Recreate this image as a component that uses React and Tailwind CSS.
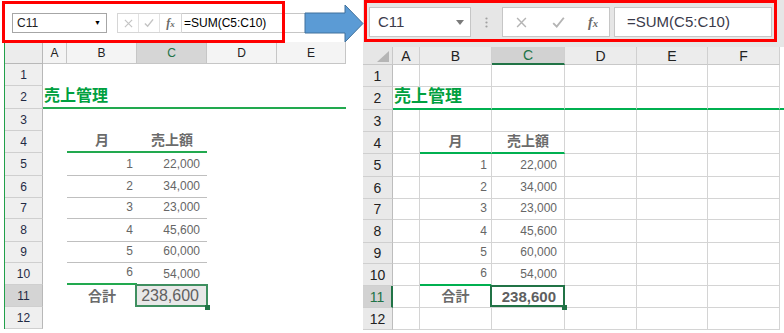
const rowH = ['h-[22px]', 'h-[23px]', 'h-[22px]', 'h-[22px]', 'h-[23px]', 'h-[22px]', 'h-[21px]', 'h-[23px]', 'h-[21px]', 'h-[22px]', 'h-[22px]', 'h-[22px]'];
const amounts = ['22,000', '34,000', '23,000', '45,600', '60,000', '54,000'];

const XIcon = ({ size = 10, color = '#c4c4c4' }) => (
  <svg width={size} height={size} viewBox="0 0 10 10">
    <path d="M1 1L9 9M9 1L1 9" stroke={color} strokeWidth="1.3" fill="none" />
  </svg>
);

const CheckIcon = ({ size = 11, color = '#c4c4c4' }) => (
  <svg width={size} height={size} viewBox="0 0 11 11">
    <path d="M1 6L4 9L10 1.5" stroke={color} strokeWidth="1.6" fill="none" />
  </svg>
);

const Fx = ({ cls }) => (
  <span className={`font-['Liberation_Serif',serif] italic font-bold text-[#6a6a6a] ${cls}`}>
    f<span className="text-[0.75em]">x</span>
  </span>
);

// border-b classes of one data cell
function leftBorder(r, c) {
  if (r === 2) return 'border-b-2 border-b-[#22a94f]';
  if (r === 4 && (c === 1 || c === 2)) return 'border-b-2 border-b-[#22a94f]';
  if (r >= 5 && r <= 9 && (c === 1 || c === 2)) return 'border-b border-b-[#bfbfbf]';
  if (r === 10 && c === 1) return 'border-b-2 border-b-[#22a94f]';
  return '';
}

function rightBorder(r, c) {
  if (r === 2) return 'border-b-2 border-b-[#00b050]';
  if (r === 4 && (c === 1 || c === 2)) return 'border-b-2 border-b-[#00b050]';
  if (r === 10 && c === 1) return 'border-b-2 border-b-[#00b050]';
  return 'border-b border-b-[#d4d4d4]';
}

function CellText({ side, r, c }) {
  const big = side === 'R';
  if (r === 2 && c === 0)
    return (
      <span className={`relative z-10 whitespace-nowrap pb-[3px] pl-[1px] font-bold leading-none text-[#00a040] ${big ? 'text-[17px]' : 'text-[16px]'}`}>
        売上管理
      </span>
    );
  if ((r === 4 || r === 11) && c === 1)
    return <span className="w-full pb-[4px] text-center text-[14px] font-bold leading-none text-[#6b6b6b]">{r === 4 ? '月' : '合計'}</span>;
  if (r === 4 && c === 2)
    return <span className="w-full pb-[4px] text-center text-[14px] font-bold leading-none text-[#6b6b6b]">売上額</span>;
  if (r >= 5 && r <= 10 && c === 1)
    return <span className="w-full pb-[5px] pr-[4px] text-right text-[12px] leading-none text-[#666]">{r - 4}</span>;
  if (r >= 5 && r <= 10 && c === 2)
    return <span className="w-full pb-[5px] pr-[7px] text-right text-[12px] leading-none text-[#666]">{amounts[r - 5]}</span>;
  if (r === 11 && c === 2)
    return (
      <>
        <span className={`relative z-10 w-full self-center pr-[8px] text-right leading-none ${big ? 'text-[15px] font-bold text-[#5f5f5f]' : 'text-[16px] text-[#606060]'}`}>
          238,600
        </span>
        <div className={`absolute -left-[2px] -top-[1px] bottom-0 -right-[1px] border-2 ${big ? 'border-[#217346]' : 'border-[#3f8f60] bg-[#e8e8e8]'}`} />
        <div className="absolute -bottom-[3px] -right-[3px] z-20 h-[5px] w-[5px] bg-[#217346]" />
      </>
    );
  return null;
}

const LeftSheet = () => (
  <div className="w-[346px] shrink-0">
    <div className="flex h-[42px] items-start pl-[12px] pt-[13px]">
      <div className="flex h-[20px] w-[95px] items-center justify-between border border-[#a6a6a6] pl-[4px] pr-[5px] text-[12px] text-[#222]">
        <span>C11</span>
        <span className="text-[7px] text-black">▼</span>
      </div>
      <div className="ml-[10px] flex h-[20px] border border-[#d6d6d6]">
        <div className="flex w-[21px] items-center justify-center border-r border-[#e2e2e2]">
          <XIcon size={9} />
        </div>
        <div className="flex w-[21px] items-center justify-center border-r border-[#e2e2e2]">
          <CheckIcon size={10} />
        </div>
        <div className="flex w-[21px] items-center justify-center">
          <Fx cls="text-[12px]" />
        </div>
      </div>
      <div className="flex h-[20px] flex-1 items-center border border-l-0 border-[#c6c6c6] pl-[2px] text-[12px] text-black">
        =SUM(C5:C10)
      </div>
    </div>
    <div className="flex">
      <div className="w-[4px]" />
      <div className="border-l border-[#21a04a]">
        <div className="grid h-[22px] grid-cols-[38px_24px_70px_70px_70px_69px] grid-rows-[22px]">
          <div className="border-b border-r border-[#b8b8b8] bg-[#ececec]" />
          {['A', 'B', 'C', 'D', 'E'].map((l) => (
            <div
              key={l}
              className={`flex items-center justify-center border-b border-r border-[#c6c6c6] text-[12px] ${l === 'C' ? 'bg-[#d6d6d6] text-[#217346]' : 'bg-[#f4f4f4] text-[#222]'}`}
            >
              {l}
            </div>
          ))}
        </div>
        {rowH.map((h, i) => {
          const r = i + 1;
          return (
            <div key={r} className={`grid grid-cols-[38px_24px_70px_70px_70px_69px] grid-rows-[100%] overflow-visible ${h}`}>
              <div
                className={`flex items-center justify-center border-b border-r border-b-[#cfcfcf] border-r-[#b8b8b8] text-[12px] leading-none text-[#1f2a44] ${r === 11 ? 'bg-[#d4d4d4]' : 'bg-[#efefef]'}`}
              >
                {r}
              </div>
              {[0, 1, 2, 3, 4].map((c) => (
                <div key={c} className={`relative flex items-end ${leftBorder(r, c)}`}>
                  <CellText side="L" r={r} c={c} />
                </div>
              ))}
            </div>
          );
        })}
      </div>
    </div>
  </div>
);

const RightSheet = () => (
  <div className="w-[421px] shrink-0">
    <div className="flex h-[47px] items-start bg-[#e6e6e6] pl-[6px] pt-[7px]">
      <div className="flex h-[30px] w-[102px] items-center justify-between border border-[#c6c6c6] bg-white pl-[8px] pr-[6px] text-[15px] text-[#3a3a4a]">
        <span>C11</span>
        <svg width="8" height="5" viewBox="0 0 8 5">
          <path d="M0 0H8L4 5Z" fill="#7a7a7a" />
        </svg>
      </div>
      <div className="flex h-[30px] w-[31px] items-center justify-center">
        <svg width="3" height="11" viewBox="0 0 3 11">
          <circle cx="1.5" cy="1.5" r="1.1" fill="#a0a0a0" />
          <circle cx="1.5" cy="5.5" r="1.1" fill="#a0a0a0" />
          <circle cx="1.5" cy="9.5" r="1.1" fill="#a0a0a0" />
        </svg>
      </div>
      <div className="flex h-[30px] w-[108px] items-center border border-[#c6c6c6] bg-white">
        <div className="flex w-[36px] justify-center">
          <XIcon size={11} color="#b4b4b4" />
        </div>
        <div className="flex w-[38px] justify-center">
          <CheckIcon size={13} color="#b4b4b4" />
        </div>
        <div className="flex w-[32px] justify-center">
          <Fx cls="text-[14px]" />
        </div>
      </div>
      <div className="ml-[4px] flex h-[30px] w-[158px] items-center border border-[#c6c6c6] bg-white pl-[12px] text-[15px] text-[#3a3a4a]">
        =SUM(C5:C10)
      </div>
    </div>
    <div className="grid h-[18px] grid-cols-[30px_27px_72px_73px_72px_71px_72px_4px] grid-rows-[18px]">
      <div className="relative border-b border-r border-[#c8c8c8] bg-[#e6e6e6]">
        <svg className="absolute bottom-[2px] right-[3px]" width="12" height="11" viewBox="0 0 12 11">
          <path d="M12 0V11H0Z" fill="#b5b5b5" />
        </svg>
      </div>
      {['A', 'B', 'C', 'D', 'E', 'F'].map((l) => (
        <div
          key={l}
          className={`flex items-center justify-center border-r border-[#d0d0d0] text-[14px] leading-none ${l === 'C' ? 'border-b-2 border-b-[#217346] bg-[#d2d2d2] text-[#217346]' : 'border-b border-b-[#c8c8c8] bg-[#ececec] text-[#222]'}`}
        >
          {l}
        </div>
      ))}
      <div className="bg-white" />
    </div>
    {rowH.map((h, i) => {
      const r = i + 1;
      return (
        <div key={r} className={`grid grid-cols-[30px_27px_72px_73px_72px_71px_72px_4px] grid-rows-[100%] ${h}`}>
          <div
            className={`flex items-center justify-center border-b border-b-[#cfcfcf] text-[14px] leading-none ${r === 11 ? 'border-r-2 border-r-[#217346] bg-[#d2d2d2] text-[#217346]' : 'border-r border-r-[#bdbdbd] bg-[#e9e9e9] text-[#222]'}`}
          >
            {r}
          </div>
          {[0, 1, 2, 3, 4, 5].map((c) => (
            <div
              key={c}
              className={`relative flex items-end ${r === 2 && c === 0 ? '' : 'border-r border-r-[#d4d4d4]'} ${rightBorder(r, c)}`}
            >
              <CellText side="R" r={r} c={c} />
            </div>
          ))}
          <div className={r === 2 ? 'border-b-2 border-b-[#00b050]' : ''} />
        </div>
      );
    })}
  </div>
);

const Arrow = () => (
  <svg className="absolute left-[300px] top-0" width="70" height="45" viewBox="0 0 70 45">
    <polygon points="5,13 45,13 45,5 63,23.5 45,42 45,33 5,33" fill="#5b9bd5" stroke="#41719c" strokeWidth="1" />
  </svg>
);

export default function App() {
  return (
    <div className="relative h-[333px] w-[784px] overflow-hidden bg-white font-['Liberation_Sans','Noto_Sans_CJK_JP',sans-serif]">
      <div className="flex">
        <LeftSheet />
        <div className="w-[17px] shrink-0" />
        <RightSheet />
      </div>
      <Arrow />
      <div className="absolute left-[2px] top-[1px] h-[42px] w-[283px] border-[3px] border-[#ff0000]" />
      <div className="absolute left-[364px] top-0 h-[42px] w-[413px] border-[3px] border-[#ff0000]" />
    </div>
  );
}
